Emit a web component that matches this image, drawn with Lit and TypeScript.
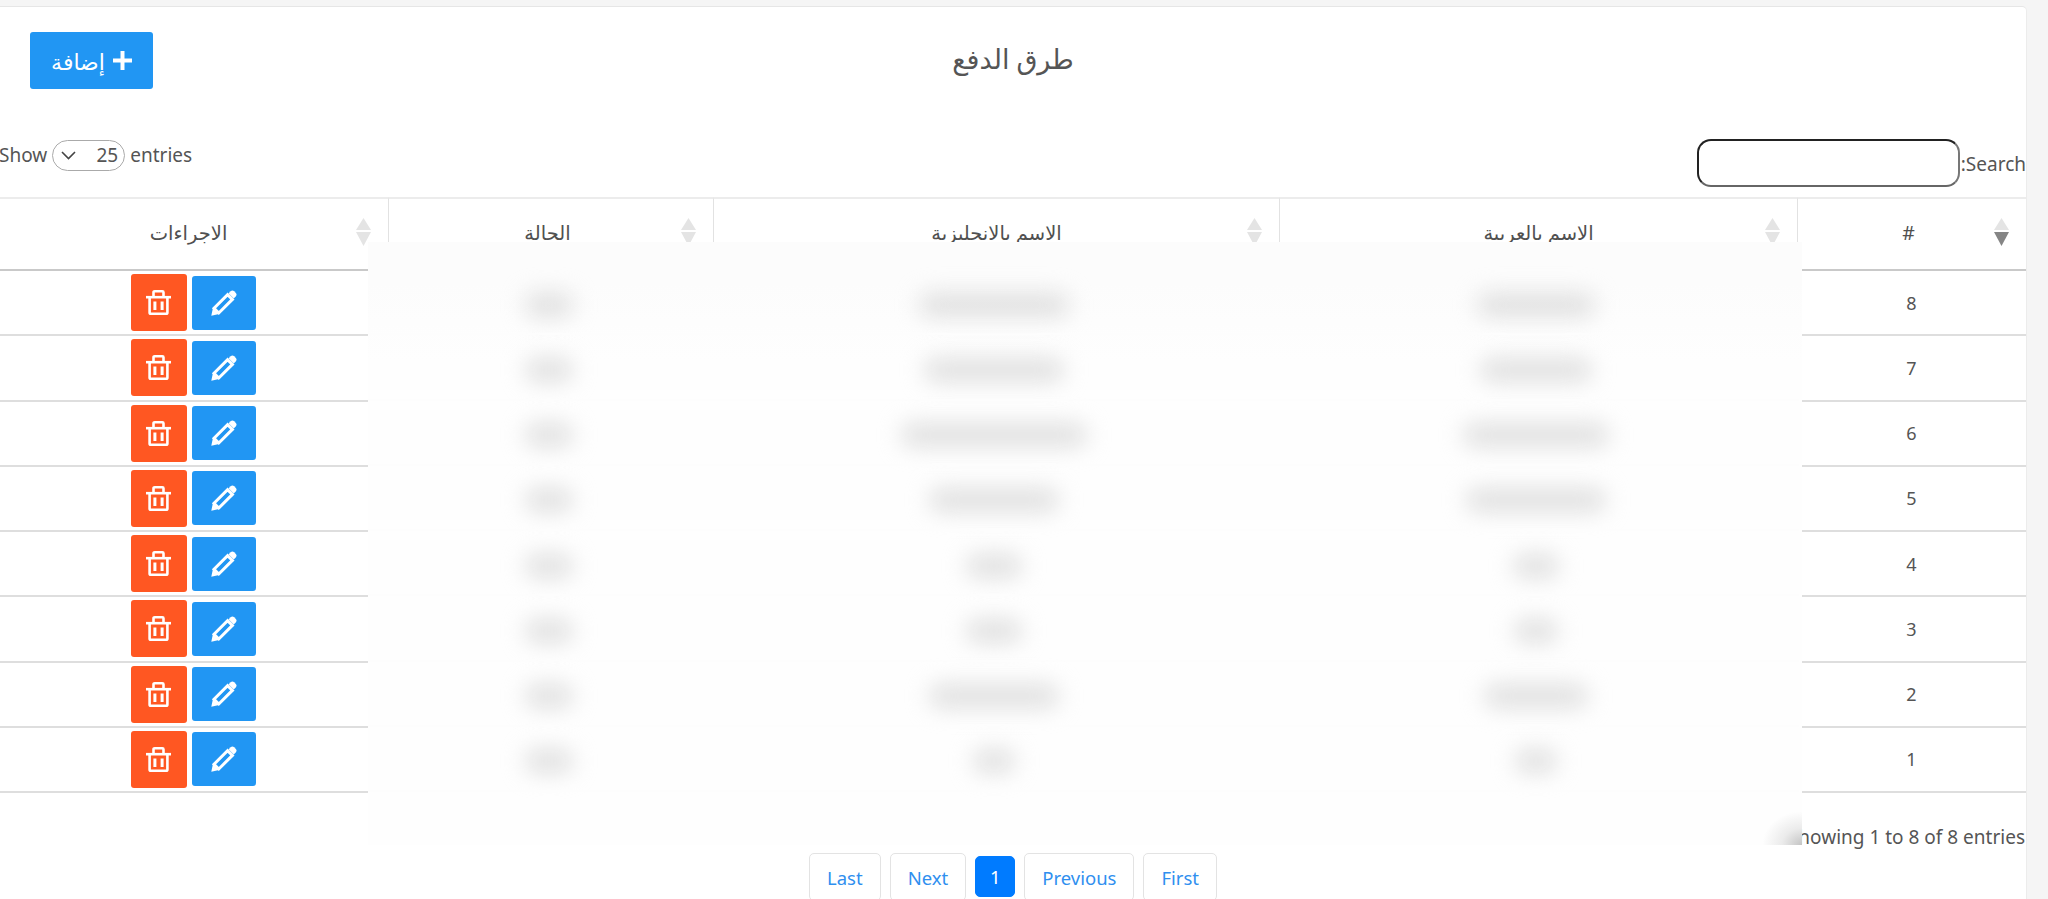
import { LitElement, html, css, svg } from "lit";
import { customElement } from "lit/decorators.js";

const HEADERS = [
  { label: "#", active: true },
  { label: "الاسم بالعربية" },
  { label: "الاسم بالانجليزية" },
  { label: "الحالة" },
  { label: "الاجراءات" },
];
const ROWS = [8, 7, 6, 5, 4, 3, 2, 1];
// widths of the blurred (redacted) cell contents: [english, arabic]
const BLOBS = [
  [150, 118], [140, 112], [186, 146], [130, 140],
  [56, 46], [56, 44], [130, 104], [42, 42],
];
const PAGES = [
  { t: "Last" }, { t: "Next" }, { t: "1", on: true }, { t: "Previous" }, { t: "First" },
];

const sortIcon = (active: boolean) => html`<svg class="sort" viewBox="0 0 15 28" width="15" height="28">
  <path d="M7.5 0L15 12H0Z" fill="#e4e4e4"></path>
  <path d="M0 14H15L7.5 28Z" fill="${active ? "#858585" : "#e4e4e4"}"></path>
</svg>`;

const trash = svg`<g fill="none" stroke="#fff" stroke-width="2.6">
  <path d="M7.5 6V2.4Q7.5 1.3 8.7 1.3H16.3Q17.5 1.3 17.5 2.4V6"></path>
  <path d="M0 7.2H25"></path>
  <path d="M3.6 7.5V22.4Q3.6 23.7 4.9 23.7H20.1Q21.4 23.7 21.4 22.4V7.5"></path>
</g><rect x="7.4" y="11.5" width="3" height="8.5" fill="#fff"></rect><rect x="14.6" y="11.5" width="3" height="8.5" fill="#fff"></rect>`;

const pencil = svg`<path d="M3 18.2L16.6 4.6L21.4 9.4L7.8 23Z" fill="none" stroke="#fff" stroke-width="3"></path>
<path d="M0.3 25.7L2.2 16.8L9.2 23.8Z" fill="#fff"></path>
<path d="M17.6 3.2L19.6 1.3Q21.4-.3 23.2 1.3L24.8 2.9Q26.3 4.7 24.7 6.4L22.8 8.4Z" fill="#fff"></path>`;

@customElement("app-root")
export class AppRoot extends LitElement {
  static styles = css`
    :host {
      display: block;
      height: 899px;
      overflow: hidden;
      background: #f5f5f5;
      padding: 6px 21px 0 0;
      box-sizing: border-box;
      font-family: "Noto Sans", "DejaVu Sans", sans-serif;
      font-size: 19px;
      color: #555;
    }
    .card {
      position: relative;
      height: 893px;
      background: #fff;
      border-top: 1px solid #e6e6e6;
      border-right: 1px solid #ececec;
      border-top-right-radius: 5px;
      overflow: hidden;
    }
    .head {
      display: grid;
      grid-template-columns: 1fr auto 1fr;
      align-items: center;
      padding-top: 25px;
    }
    .add {
      justify-self: start;
      display: flex;
      align-items: center;
      justify-content: center;
      gap: 8px;
      width: 123px;
      height: 57px;
      margin-left: 30px;
      border: 0;
      border-radius: 3px;
      background: #2196f3;
      color: #fff;
      font: inherit;
      font-size: 22px;
    }
    .title {
      margin: 0;
      font-size: 27px;
      font-weight: 400;
      color: #555;
      position: relative;
      top: -2px;
    }
    .toolbar {
      display: flex;
      justify-content: space-between;
      align-items: flex-start;
      height: 58px;
      margin-top: 50px;
      margin-left: -1px;
    }
    .show, .search {
      display: flex;
      align-items: center;
      white-space: nowrap;
    }
    .show { gap: 5px; height: 30px; margin-top: 1px; }
    .select {
      display: flex;
      align-items: center;
      justify-content: space-between;
      box-sizing: border-box;
      width: 73px;
      height: 31px;
      padding: 0 6px 0 8px;
      border: 1px solid #aaa;
      border-radius: 16px;
      color: #555;
    }
    .search { gap: 1px; height: 48px; }
    .input {
      box-sizing: border-box;
      width: 263px;
      height: 48px;
      border: 2px solid;
      border-color: #222 #777 #666 #222;
      border-radius: 14px;
      background: #fff;
      outline: none;
    }
    .label { position: relative; top: 1px; }
    .wrap { margin-left: -11px; }
    table {
      width: 2037px;
      table-layout: fixed;
      border-collapse: separate;
      border-spacing: 0;
    }
    th {
      position: relative;
      height: 66px;
      padding: 0 0 4px;
      box-sizing: content-box;
      border-top: 2px solid #ececec;
      border-bottom: 2px solid #c9c9c9;
      border-left: 1px solid #e2e2e2;
      font-weight: 400;
      font-size: 19.5px;
      color: #505050;
      text-align: center;
    }
    th:first-child, th:nth-child(4) { padding-right: 7px; }
    th:last-child { border-left: 0; }
    .sort { position: absolute; right: 17px; top: 19px; }
    td {
      height: 63.25px;
      padding: 0;
      border-bottom: 2px solid #dedede;
      text-align: center;
      color: #555;
      font-size: 18px;
    }
    .actions {
      display: flex;
      align-items: center;
      justify-content: center;
      gap: 5px;
      padding-left: 9px;
      direction: rtl;
    }
    .btn {
      display: flex;
      align-items: center;
      justify-content: center;
      border: 0;
      padding: 0;
      border-radius: 3px;
    }
    .edit { width: 64px; height: 54px; background: #2196f3; }
    .del { width: 56px; height: 57px; background: #ff5722; }
    .info {
      margin-top: 32px;
      height: 24px;
      line-height: 24px;
      text-align: right;
      padding-right: 1px;
      white-space: nowrap;
    }
    .pages {
      display: flex;
      justify-content: center;
      align-items: flex-start;
      gap: 9px;
      margin-top: 4px;
    }
    .page {
      display: flex;
      align-items: center;
      justify-content: center;
      box-sizing: border-box;
      height: 48px;
      padding: 0 17px;
      border: 1px solid #e3e3e3;
      border-radius: 5px;
      color: #2f8fef;
      background: #fff;
      font-size: 18.5px;
    }
    .page.on {
      width: 40px;
      height: 41px;
      margin-top: 3px;
      padding: 0;
      border-color: #007bff;
      background: #007bff;
      color: #fff;
    }
    .veil {
      position: absolute;
      left: 368px;
      top: 235px;
      width: 1434px;
      height: 603px;
      overflow: hidden;
      background: linear-gradient(#fcfcfc, #fcfcfc 40px, #fefefe 120px);
      padding: 30px 0 0 18px;
      box-sizing: border-box;
    }
    .vrow {
      display: grid;
      grid-template-columns: 325px 566px 518px;
      align-items: center;
      justify-items: center;
      height: 65.25px;
      box-sizing: border-box;
      position: relative;
    }
    .vrow::after {
      content: "";
      position: absolute;
      left: -21px;
      width: 1434px;
      bottom: 2px;
      height: 2px;
      background: #fdfdfd;
    }
    .blob {
      height: 24px;
      background: #e0e0e0;
      border-radius: 12px;
      filter: blur(11px);
    }
    .smudge {
      position: absolute;
      right: 0;
      bottom: 0;
      width: 40px;
      height: 34px;
      background: radial-gradient(ellipse at 100% 100%, #c4c4c4 0, #ebebeb 35%, rgba(255, 255, 255, 0) 70%);
    }
  `;

  render() {
    return html`<div class="card">
      <div class="head">
        <button class="add">
          <span dir="rtl">إضافة</span>
          <svg width="19" height="19" viewBox="0 0 19 19"><path d="M9.5 0V19M0 9.5H19" stroke="#fff" stroke-width="4"></path></svg>
        </button>
        <h1 class="title" dir="rtl">طرق الدفع</h1>
        <span></span>
      </div>
      <div class="toolbar">
        <div class="show">
          <span>Show</span>
          <div class="select">
            <svg width="15" height="9" viewBox="0 0 15 9"><path d="M1 1L7.5 7.5L14 1" fill="none" stroke="#444" stroke-width="1.6"></path></svg>
            <span>25</span>
          </div>
          <span>entries</span>
        </div>
        <div class="search">
          <input class="input" type="text" aria-label="Search" />
          <span class="label">:Search</span>
        </div>
      </div>
      <div class="wrap">
        <table dir="rtl">
          <colgroup>
            <col style="width:229px" /><col style="width:518px" /><col style="width:566px" /><col style="width:325px" /><col style="width:399px" />
          </colgroup>
          <thead>
            <tr>${HEADERS.map((h) => html`<th>${h.label}${sortIcon(!!h.active)}</th>`)}</tr>
          </thead>
          <tbody>
            ${ROWS.map(
              (n) => html`<tr>
                <td>${n}</td><td></td><td></td><td></td>
                <td>
                  <div class="actions">
                    <button class="btn edit" aria-label="edit"><svg width="26" height="26" viewBox="0 0 26 26">${pencil}</svg></button>
                    <button class="btn del" aria-label="delete"><svg width="25" height="25" viewBox="0 0 25 25">${trash}</svg></button>
                  </div>
                </td>
              </tr>`
            )}
          </tbody>
        </table>
      </div>
      <div class="info">Showing 1 to 8 of 8 entries</div>
      <div class="pages">
        ${PAGES.map((p) => html`<div class="page ${p.on ? "on" : ""}">${p.t}</div>`)}
      </div>
      <div class="veil">
        ${BLOBS.map(
          ([en, ar]) => html`<div class="vrow">
            <div class="blob" style="width:48px"></div>
            <div class="blob" style="width:${en}px"></div>
            <div class="blob" style="width:${ar}px"></div>
          </div>`
        )}
        <div class="smudge"></div>
      </div>
    </div>`;
  }
}
